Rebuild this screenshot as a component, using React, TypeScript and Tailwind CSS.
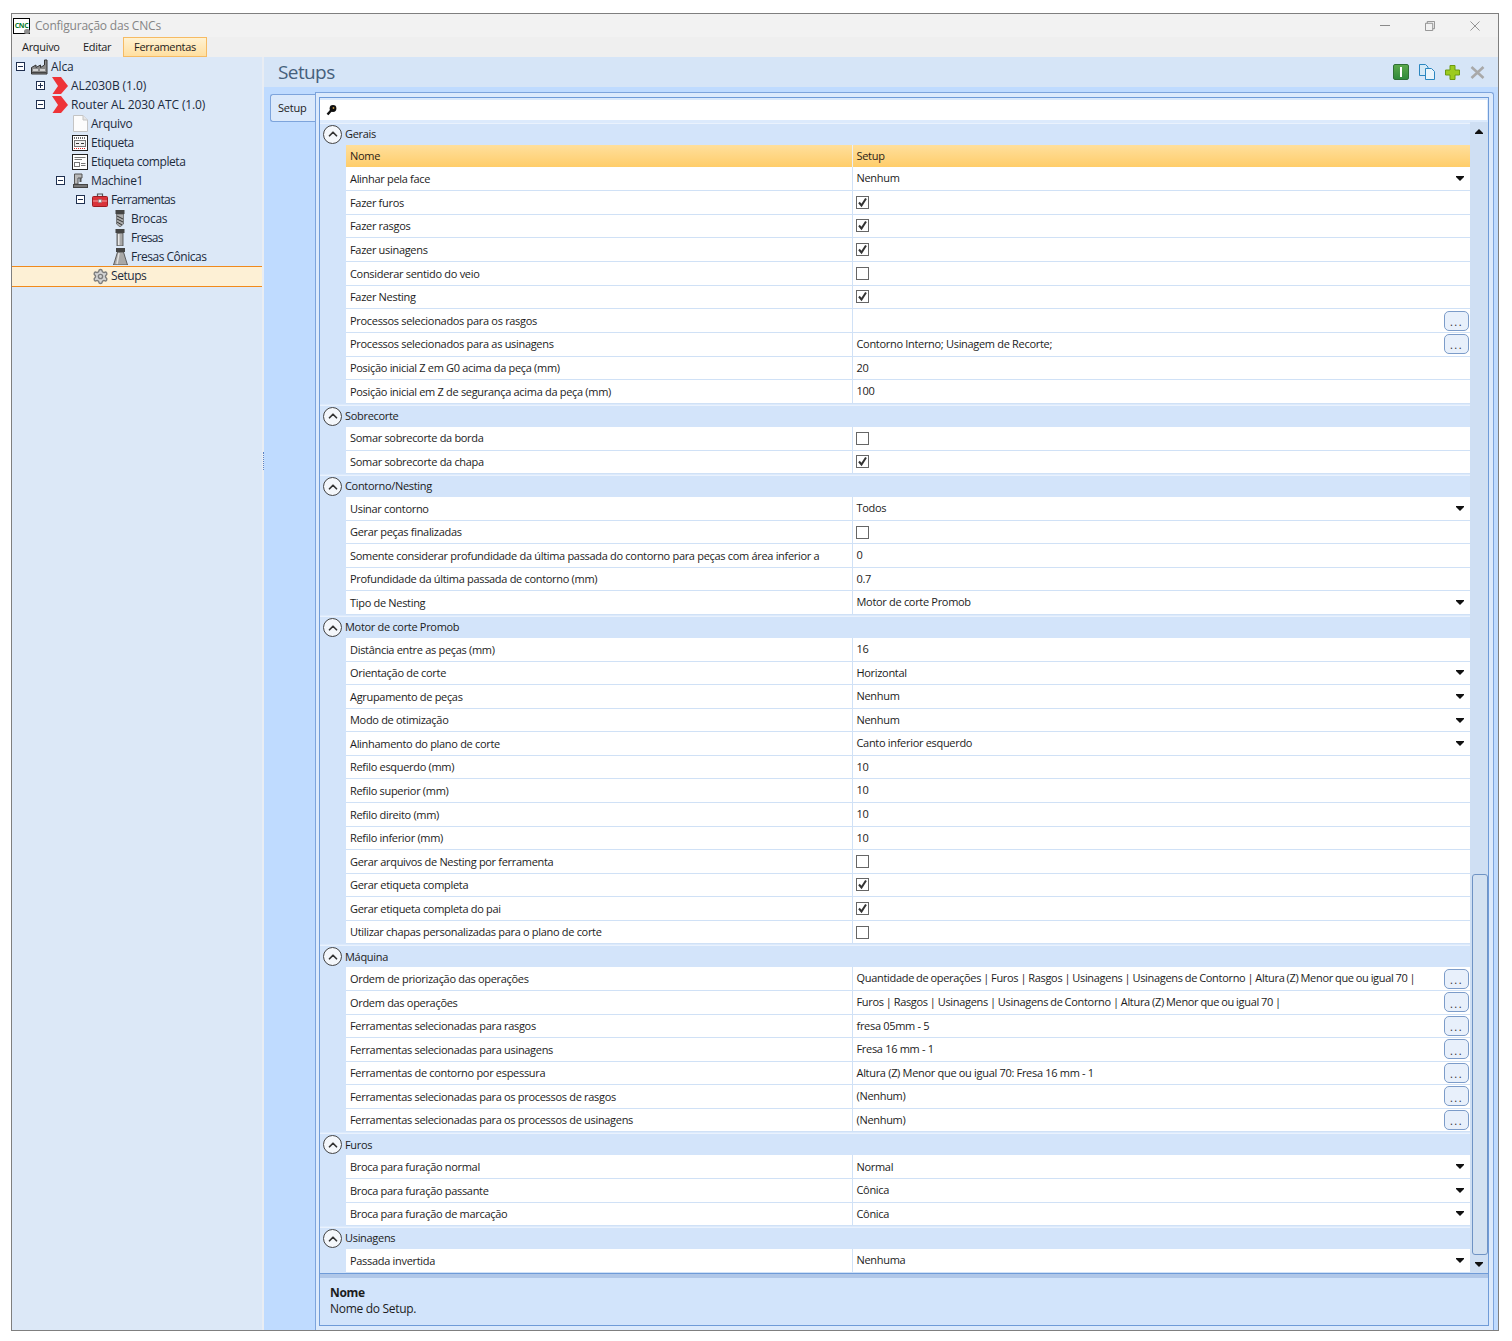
import { ChevronUp, Settings } from "lucide-react"

const font = { fontFamily: '"Open Sans", "Noto Sans", sans-serif' }

type Row = { label: string; kind: "text" | "select" | "check" | "more"; value?: string; on?: boolean }
type Group = { title: string; rows: Row[]; header?: boolean }

const groups: Group[] = [
  {
    title: "Gerais",
    header: true,
    rows: [
      { label: "Alinhar pela face", kind: "select", value: "Nenhum" },
      { label: "Fazer furos", kind: "check", on: true },
      { label: "Fazer rasgos", kind: "check", on: true },
      { label: "Fazer usinagens", kind: "check", on: true },
      { label: "Considerar sentido do veio", kind: "check", on: false },
      { label: "Fazer Nesting", kind: "check", on: true },
      { label: "Processos selecionados para os rasgos", kind: "more", value: "" },
      { label: "Processos selecionados para as usinagens", kind: "more", value: "Contorno Interno; Usinagem de Recorte;" },
      { label: "Posição inicial Z em G0 acima da peça (mm)", kind: "text", value: "20" },
      { label: "Posição inicial em Z de segurança acima da peça (mm)", kind: "text", value: "100" },
    ],
  },
  {
    title: "Sobrecorte",
    rows: [
      { label: "Somar sobrecorte da borda", kind: "check", on: false },
      { label: "Somar sobrecorte da chapa", kind: "check", on: true },
    ],
  },
  {
    title: "Contorno/Nesting",
    rows: [
      { label: "Usinar contorno", kind: "select", value: "Todos" },
      { label: "Gerar peças finalizadas", kind: "check", on: false },
      { label: "Somente considerar profundidade da última passada do contorno para peças com área inferior a", kind: "text", value: "0" },
      { label: "Profundidade da última passada de contorno (mm)", kind: "text", value: "0.7" },
      { label: "Tipo de Nesting", kind: "select", value: "Motor de corte Promob" },
    ],
  },
  {
    title: "Motor de corte Promob",
    rows: [
      { label: "Distância entre as peças (mm)", kind: "text", value: "16" },
      { label: "Orientação de corte", kind: "select", value: "Horizontal" },
      { label: "Agrupamento de peças", kind: "select", value: "Nenhum" },
      { label: "Modo de otimização", kind: "select", value: "Nenhum" },
      { label: "Alinhamento do plano de corte", kind: "select", value: "Canto inferior esquerdo" },
      { label: "Refilo esquerdo (mm)", kind: "text", value: "10" },
      { label: "Refilo superior (mm)", kind: "text", value: "10" },
      { label: "Refilo direito (mm)", kind: "text", value: "10" },
      { label: "Refilo inferior (mm)", kind: "text", value: "10" },
      { label: "Gerar arquivos de Nesting por ferramenta", kind: "check", on: false },
      { label: "Gerar etiqueta completa", kind: "check", on: true },
      { label: "Gerar etiqueta completa do pai", kind: "check", on: true },
      { label: "Utilizar chapas personalizadas para o plano de corte", kind: "check", on: false },
    ],
  },
  {
    title: "Máquina",
    rows: [
      { label: "Ordem de priorização das operações", kind: "more", value: "Quantidade de operações | Furos | Rasgos | Usinagens | Usinagens de Contorno | Altura (Z) Menor que ou igual 70 |" },
      { label: "Ordem das operações", kind: "more", value: "Furos | Rasgos | Usinagens | Usinagens de Contorno | Altura (Z) Menor que ou igual 70 |" },
      { label: "Ferramentas selecionadas para rasgos", kind: "more", value: "fresa 05mm - 5" },
      { label: "Ferramentas selecionadas para usinagens", kind: "more", value: "Fresa 16 mm - 1" },
      { label: "Ferramentas de contorno por espessura", kind: "more", value: "Altura (Z) Menor que ou igual 70: Fresa 16 mm - 1" },
      { label: "Ferramentas selecionadas para os processos de rasgos", kind: "more", value: "(Nenhum)" },
      { label: "Ferramentas selecionadas para os processos de usinagens", kind: "more", value: "(Nenhum)" },
    ],
  },
  {
    title: "Furos",
    rows: [
      { label: "Broca para furação normal", kind: "select", value: "Normal" },
      { label: "Broca para furação passante", kind: "select", value: "Cônica" },
      { label: "Broca para furação de marcação", kind: "select", value: "Cônica" },
    ],
  },
  {
    title: "Usinagens",
    rows: [{ label: "Passada invertida", kind: "select", value: "Nenhuma" }],
  },
]

function DownArrow() {
  return (
    <svg width="8" height="5" viewBox="0 0 8 5" className="shrink-0">
      <path d="M0 0H8V1L4 5L0 1Z" fill="#111" />
    </svg>
  )
}

function Check({ on }: { on?: boolean }) {
  return (
    <div className="w-[13px] h-[13px] border border-[#666] bg-white flex items-center justify-center">
      {on && (
        <svg width="11" height="11" viewBox="0 0 11 11">
          <path d="M2 5.5L4.5 8.5L9 1.5" fill="none" stroke="#333" strokeWidth="2" />
        </svg>
      )}
    </div>
  )
}

function MoreButton() {
  return (
    <div className="w-[25px] h-[20px] rounded-[5px] border border-[#7c9cc9] bg-[#e8f0fb] flex items-center justify-center pt-[3px] text-[11px] tracking-[1.5px] text-[#333] shrink-0">
      ...
    </div>
  )
}

function PropRow({ row, tall }: { row: Row; tall?: boolean }) {
  const piped = row.value?.includes("|")
  return (
    <div className={`flex ${tall ? "h-[23.65px]" : "h-[23.55px]"} bg-white border-b border-[#d0e1f6] ml-[26px] text-[11px] tracking-[-0.31px] text-[#1c1c1c]`}>
      <div className="w-[507px] shrink-0 pl-[4px] flex items-center whitespace-nowrap overflow-hidden border-r border-[#d0e1f6] pt-[1px]">
        {row.label}
      </div>
      <div className="flex-1 flex items-center justify-between pl-[3px] whitespace-nowrap min-w-0">
        {row.kind === "check" ? (
          <Check on={row.on} />
        ) : (
          <span className={`pl-[0.5px] ${piped ? "[word-spacing:-0.45px]" : ""}`}>{row.value}</span>
        )}
        {row.kind === "select" && (
          <div className="pr-[6px]">
            <DownArrow />
          </div>
        )}
        {row.kind === "more" && (
          <div className="pr-[1px]">
            <MoreButton />
          </div>
        )}
      </div>
    </div>
  )
}

function PropGroup({ group }: { group: Group }) {
  return (
    <div className="bg-[#d3e4fa] mb-[1px] border-t border-[#eaf2fd]">
      <div className="flex items-center h-[21.2px] text-[11px] tracking-[-0.31px] text-[#1c1c1c]">
        <div className="w-[19px] h-[19px] rounded-full border border-[#444] bg-[#f4f7fb] ml-[3px] mr-[3px] flex items-center justify-center">
          <ChevronUp size={14} strokeWidth={3} color="#333" />
        </div>
        <span>{group.title}</span>
      </div>
      {group.header && (
        <div className="flex h-[22.5px] ml-[26px] text-[11px] tracking-[-0.31px] text-[#2b2216] bg-gradient-to-b from-[#ffdf9b] to-[#ffcd69]">
          <div className="w-[507px] pl-[4px] flex items-center border-r border-[#e8eef6]">Nome</div>
          <div className="pl-[3.5px] flex items-center">Setup</div>
        </div>
      )}
      {group.rows.map((row) => (
        <PropRow key={row.label} row={row} tall={group.header} />
      ))}
    </div>
  )
}

function Expander({ open }: { open: boolean }) {
  return (
    <div className="w-[9px] h-[9px] border border-[#1f2f4f] bg-white flex items-center justify-center relative">
      <div className="w-[5px] h-[1px] bg-[#1f2f4f]" />
      {!open && <div className="absolute w-[1px] h-[5px] bg-[#1f2f4f]" />}
    </div>
  )
}

function FactoryIcon() {
  return (
    <svg width="18" height="16" viewBox="0 0 18 16" className="shrink-0">
      <path d="M0.5 15V8.5L5 6V8.5L9.5 6V8.5L13.5 6V1H16V15Z" fill="#8a8a8a" stroke="#333" />
      <path d="M2 11H7M9 11H14" stroke="#e8e8e8" strokeWidth="1.5" />
      <path d="M1 13.5H15.5" stroke="#444" />
    </svg>
  )
}

function RedChevron() {
  return (
    <svg width="17" height="17" viewBox="0 0 17 17" className="shrink-0">
      <path d="M0 0H9L16 9L9 17H0.5L6 9Z" fill="#ee3338" />
    </svg>
  )
}

function DocIcon() {
  return (
    <svg width="15" height="17" viewBox="0 0 15 17" className="shrink-0">
      <path d="M0.5 0.5H10L14.5 5V16.5H0.5Z" fill="#fcfcfc" stroke="#c4c4c4" />
      <path d="M10 0.5V5H14.5" fill="#e6e6e6" stroke="#c4c4c4" />
    </svg>
  )
}

function LabelIcon() {
  return (
    <svg width="16" height="16" viewBox="0 0 16 16" className="shrink-0">
      <rect x="0.5" y="0.5" width="15" height="15" fill="#fff" stroke="#222" />
      <path d="M2 3H14" stroke="#444" strokeWidth="1.5" strokeDasharray="1 1" />
      <rect x="2.5" y="5.5" width="11" height="6" fill="#f0f0f0" stroke="#777" />
      <path d="M4 8.5H7M9 8.5H12" stroke="#333" />
      <path d="M2 13.5H14" stroke="#d22" strokeDasharray="1 1" />
    </svg>
  )
}

function FullLabelIcon() {
  return (
    <svg width="16" height="16" viewBox="0 0 16 16" className="shrink-0">
      <rect x="0.5" y="0.5" width="15" height="15" fill="#fff" stroke="#222" />
      <path d="M2.5 3.5H13.5M2.5 5.5H10" stroke="#777" />
      <rect x="2.5" y="8.5" width="5" height="4" fill="none" stroke="#777" />
      <path d="M9 9.5H13.5M9 11.5H13.5" stroke="#777" />
    </svg>
  )
}

function MachineIcon() {
  return (
    <svg width="15" height="15" viewBox="0 0 15 15" className="shrink-0">
      <path d="M1.5 11V1H9V5H5V11Z" fill="#b9b9b9" stroke="#555" />
      <rect x="6.5" y="5" width="2" height="4" fill="#555" />
      <rect x="0.5" y="11.5" width="14" height="3" fill="#777" stroke="#444" />
    </svg>
  )
}

function ToolboxIcon() {
  return (
    <svg width="16" height="14" viewBox="0 0 16 14" className="shrink-0">
      <path d="M5.5 3.5V1H10.5V3.5" fill="none" stroke="#555" strokeWidth="1.2" />
      <rect x="0.5" y="3.5" width="15" height="10" rx="1" fill="#d9333a" stroke="#9c1c22" />
      <path d="M1 8H15" stroke="#f6a0a0" />
      <rect x="6.5" y="6.5" width="3" height="3" fill="#eee" stroke="#777" strokeWidth="0.5" />
    </svg>
  )
}

function DrillIcon() {
  return (
    <svg width="10" height="17" viewBox="0 0 10 17" className="shrink-0">
      <rect x="0.5" y="0" width="9" height="4" fill="#444" />
      <path d="M1.5 4H8.5V14L5 17L1.5 14Z" fill="#aaa" stroke="#444" strokeWidth="0.6" />
      <path d="M2 6L8 9M2 9L8 12M2 12L7 15" stroke="#333" />
    </svg>
  )
}

function MillIcon() {
  return (
    <svg width="10" height="17" viewBox="0 0 10 17" className="shrink-0">
      <rect x="0.5" y="0" width="9" height="4" fill="#444" />
      <rect x="2" y="4" width="6" height="13" fill="#a8a8a8" stroke="#444" strokeWidth="0.8" />
      <rect x="3" y="5" width="1.5" height="11" fill="#e8e8e8" />
    </svg>
  )
}

function ConeIcon() {
  return (
    <svg width="15" height="17" viewBox="0 0 15 17" className="shrink-0">
      <rect x="3" y="0" width="9" height="4" fill="#444" />
      <path d="M4.5 4H10.5L14.5 17H0.5Z" fill="#a8a8a8" stroke="#444" strokeWidth="0.8" />
      <path d="M6 5L4 16" stroke="#e0e0e0" strokeWidth="1.5" />
    </svg>
  )
}

function GearIcon() {
  return <Settings size={17} strokeWidth={2} color="#7d7d7d" fill="#d4d4d4" className="shrink-0" />
}

type TreeNode = {
  label: string
  slot: string
  track: string
  icon: React.ReactNode
  exp?: "open" | "closed"
  selected?: boolean
}

const nodes: TreeNode[] = [
  { label: "Alca", slot: "pl-0", track: "tracking-[-0.1px]", icon: <FactoryIcon />, exp: "open" },
  { label: "AL2030B (1.0)", slot: "pl-[20px]", track: "tracking-[-0.07px]", icon: <RedChevron />, exp: "closed" },
  { label: "Router AL 2030 ATC (1.0)", slot: "pl-[20px]", track: "tracking-[-0.13px]", icon: <RedChevron />, exp: "open" },
  { label: "Arquivo", slot: "pl-[40px]", track: "tracking-[-0.3px]", icon: <DocIcon /> },
  { label: "Etiqueta", slot: "pl-[40px]", track: "tracking-[-0.45px]", icon: <LabelIcon /> },
  { label: "Etiqueta completa", slot: "pl-[40px]", track: "tracking-[-0.42px]", icon: <FullLabelIcon /> },
  { label: "Machine1", slot: "pl-[40px]", track: "tracking-[-0.3px]", icon: <MachineIcon />, exp: "open" },
  { label: "Ferramentas", slot: "pl-[60px]", track: "tracking-[-0.65px]", icon: <ToolboxIcon />, exp: "open" },
  { label: "Brocas", slot: "pl-[80px]", track: "tracking-[-0.3px]", icon: <DrillIcon /> },
  { label: "Fresas", slot: "pl-[80px]", track: "tracking-[-0.7px]", icon: <MillIcon /> },
  { label: "Fresas Cônicas", slot: "pl-[80px]", track: "tracking-[-0.5px]", icon: <ConeIcon /> },
  { label: "Setups", slot: "pl-[60px]", track: "tracking-[-0.45px]", icon: <GearIcon />, selected: true },
]

function Tree() {
  return (
    <div className="w-[250px] shrink-0 bg-[#dce8f7] text-[12px] text-[#1c2b3d]">
      {nodes.map((n) => (
        <div
          key={n.label}
          className={`flex items-center ${n.slot} ${n.selected ? "bg-[#fdf0d5] border-y border-[#f08a1c] h-[20.5px]" : "h-[19px]"}`}
        >
          <div className="w-[20px] flex justify-center pr-[3px]">{n.exp && <Expander open={n.exp === "open"} />}</div>
          <div className="w-[19px] flex justify-center pr-[3px]">{n.icon}</div>
          <span className={`whitespace-nowrap ${n.track}`}>{n.label}</span>
        </div>
      ))}
    </div>
  )
}

function TitleBar() {
  return (
    <div className="h-[23px] bg-[#f2f2f2] flex items-center pl-[1px] pr-[18px]">
      <div className="w-[17px] h-[16px] border border-black bg-white flex items-center justify-center text-[7px] font-bold tracking-[-0.3px] text-[#0a7a2a] leading-none relative">
        CNC
        <div className="absolute right-[-1px] bottom-[-1px] w-[6px] h-[5px] rounded-full bg-[#8d8d8d]" />
      </div>
      <span className="ml-[5px] text-[12px] tracking-[-0.2px] text-[#858585]">Configuração das CNCs</span>
      <div className="ml-auto flex items-center gap-[35px]">
        <div className="w-[10px] h-[1px] bg-[#8a8a8a]" />
        <svg width="10" height="10" viewBox="0 0 11 11">
          <path d="M0.5 2.5H8.5V10.5H0.5Z M2.5 2.5V0.5H10.5V8.5H8.5" fill="none" stroke="#8a8a8a" />
        </svg>
        <svg width="10" height="10" viewBox="0 0 11 11">
          <path d="M0.5 0.5L10.5 10.5M10.5 0.5L0.5 10.5" stroke="#8a8a8a" />
        </svg>
      </div>
    </div>
  )
}

function MenuBar() {
  return (
    <div className="h-[20px] bg-[#efefef] flex items-stretch text-[11px] tracking-[-0.31px] text-[#1c1c1c]">
      <div className="w-[59px] pl-[10px] flex items-center">Arquivo</div>
      <div className="w-[52px] pl-[12px] flex items-center">Editar</div>
      <div className="w-[84px] flex items-center justify-center border border-[#f6bb63] bg-gradient-to-b from-[#fff2d2] to-[#ffdfa0]">
        Ferramentas
      </div>
    </div>
  )
}

function Toolbar() {
  return (
    <div className="ml-auto flex items-center gap-[10px] pr-[13px]">
      <div className="w-[16px] h-[16px] rounded-[2px] border border-[#2f6f35] bg-gradient-to-b from-[#5aa84a] to-[#2f8a3c] flex items-center justify-center">
        <div className="w-[2px] h-[10px] bg-white" />
      </div>
      <svg width="16" height="16" viewBox="0 0 16 16">
        <path d="M0.5 0.5H6.5L9 3V11.5H0.5Z" fill="#d4e8f6" stroke="#2b86c0" />
        <path d="M6.5 4.5H12.5L15.5 7.5V15.5H6.5Z" fill="#eaf4fb" stroke="#2b86c0" />
      </svg>
      <svg width="15" height="15" viewBox="0 0 15 15">
        <path d="M5 0.5H10V5H14.5V10H10V14.5H5V10H0.5V5H5Z" fill="#9ccb1e" stroke="#6d9a10" />
      </svg>
      <svg width="15" height="13" viewBox="0 0 15 13">
        <path d="M1.5 1L13.5 12M13.5 1L1.5 12" stroke="#a9a9a9" strokeWidth="2.6" />
      </svg>
    </div>
  )
}

function KeyIcon() {
  return (
    <svg width="11" height="11" viewBox="0 0 10 11">
      <circle cx="6.5" cy="3.5" r="3.4" fill="#111" />
      <path d="M5 5L1 9.5" stroke="#111" strokeWidth="2.4" />
      <circle cx="7" cy="3" r="0.9" fill="#c9963f" />
    </svg>
  )
}

function ScrollColumn() {
  return (
    <div className="w-[18px] shrink-0 bg-[#cfdff3] flex flex-col items-center">
      <svg width="8" height="5" viewBox="0 0 8 5" className="mt-[7px]">
        <path d="M0 5H8V4L4 0L0 4Z" fill="#111" />
      </svg>
      <div className="flex-1" />
      <div className="w-[16px] h-[381px] rounded-[3px] border border-[#6f93c4] bg-[#d3e1f1] ml-[1px]" />
      <div className="mt-[7px] mb-[6px]">
        <DownArrow />
      </div>
    </div>
  )
}

export default function App() {
  return (
    <div className="w-[1512px] h-[1341px] bg-white pt-[13px] pl-[11px] overflow-hidden" style={font}>
      <div className="w-[1488px] h-[1318px] border border-[#7f7f7f] flex flex-col">
        <TitleBar />
        <MenuBar />
        <div className="flex-1 flex min-h-0">
          <Tree />
          <div className="w-[2px] shrink-0 bg-[#e9edf3] flex flex-col items-center pt-[395px]">
            <div className="w-[1px] h-[18px] border-l border-dotted border-[#5c82c4]" />
          </div>
          <div className="flex-1 flex flex-col min-w-0">
            <div className="h-[30px] bg-[#d6e5f7] flex items-center pl-[14px]">
              <span className="text-[19px] tracking-[-0.6px] text-[#46607c]">Setups</span>
              <Toolbar />
            </div>
            <div className="flex-1 flex min-h-0 bg-[#bfdbff] pt-[5px] pl-[6px]">
              <div className="w-[45px] shrink-0 pt-[2px]">
                <div className="h-[28px] bg-[#dbe9fb] border border-r-0 border-[#7da4dc] rounded-l-[3px] flex items-center pl-[7px] text-[11px] tracking-[-0.2px] text-[#1c1c1c]">
                  Setup
                </div>
              </div>
              <div className="flex-1 min-w-0 bg-[#dceafc] border-l border-t border-r border-[#7da4dc] rounded-tr-[3px] pt-[4px] pl-[3px] pr-[4px] pb-[4px] mr-[4px]">
                <div className="h-full border border-[#6f9bd8] bg-[#dceafc] flex flex-col">
                  <div className="h-[24px] pt-[2px] pb-[2px] pr-[1px] shrink-0">
                    <div className="h-full bg-white flex items-center pl-[6px]">
                      <KeyIcon />
                    </div>
                  </div>
                  <div className="h-[1151px] flex shrink-0">
                    <div className="flex-1 min-w-0 overflow-hidden pt-[0.7px]">
                      {groups.map((g) => (
                        <PropGroup key={g.title} group={g} />
                      ))}
                    </div>
                    <ScrollColumn />
                  </div>
                  <div className="flex-1 border-t border-[#6f9bd8] bg-[#d2e4fb]">
                    <div className="h-[4px] bg-[#b0c7e8]" />
                    <div className="pl-[10px] pt-[7px] text-[12px] tracking-[-0.3px] leading-[16px] text-[#1c1c1c]">
                      <div className="font-bold">Nome</div>
                      <div>Nome do Setup.</div>
                    </div>
                  </div>
                </div>
              </div>
            </div>
          </div>
        </div>
      </div>
    </div>
  )
}
